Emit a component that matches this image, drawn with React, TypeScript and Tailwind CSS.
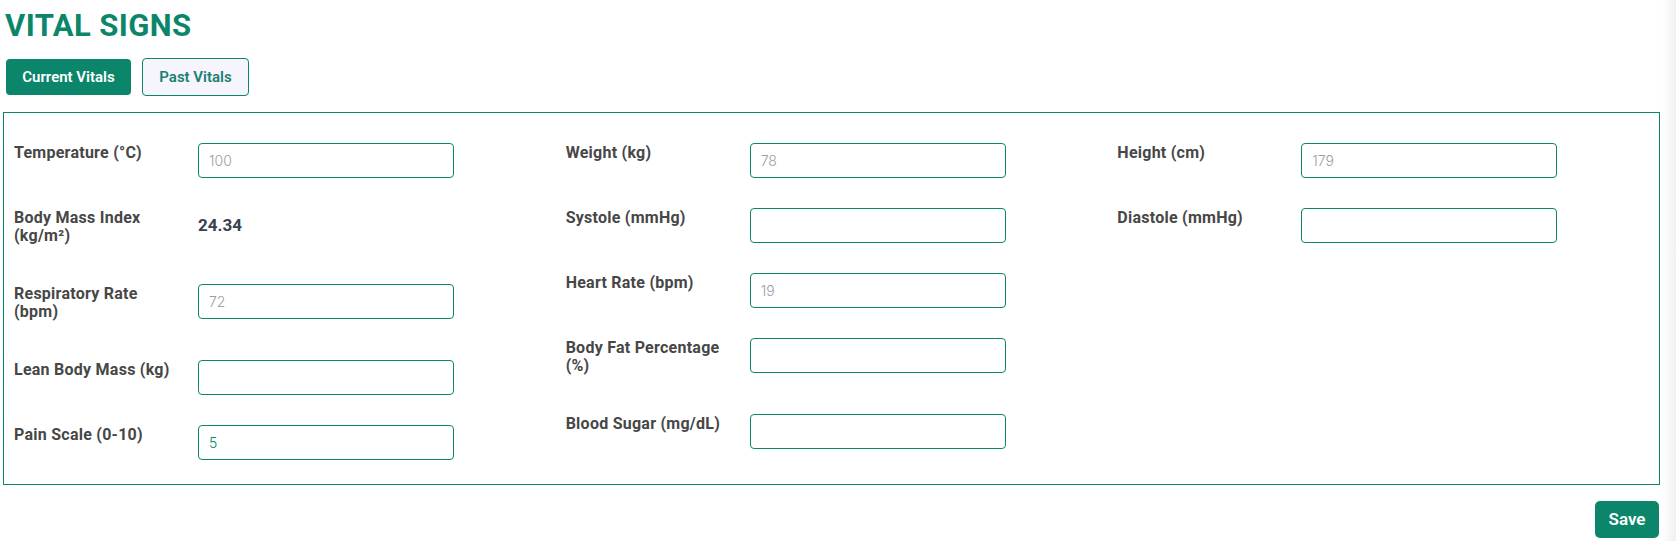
import React from "react";

type Field = {
  label: string;
  value?: string;
  muted?: boolean;
  display?: boolean;
};

const columns: Field[][] = [
  [
    { label: "Temperature (°C)", value: "100", muted: true },
    { label: "Body Mass Index (kg/m²)", value: "24.34", display: true },
    { label: "Respiratory Rate (bpm)", value: "72", muted: true },
    { label: "Lean Body Mass (kg)" },
    { label: "Pain Scale (0-10)", value: "5" },
  ],
  [
    { label: "Weight (kg)", value: "78", muted: true },
    { label: "Systole (mmHg)" },
    { label: "Heart Rate (bpm)", value: "19", muted: true },
    { label: "Body Fat Percentage (%)" },
    { label: "Blood Sugar (mg/dL)" },
  ],
  [
    { label: "Height (cm)", value: "179", muted: true },
    { label: "Diastole (mmHg)" },
  ],
];

const VitalRow = ({ field }: { field: Field }) => (
  <div className="flex items-start">
    <div className="w-[184px] shrink-0 pr-[18px]">
      <label className="block pt-px pb-[9px] text-[16px] leading-[18px] font-bold tracking-[0.25px] text-[#474747]">
        {field.label}
      </label>
    </div>
    {field.display ? (
      <div className="flex h-[35px] items-center text-[17px] font-bold text-[#374151]">
        {field.value}
      </div>
    ) : (
      <input
        type="text"
        defaultValue={field.value ?? ""}
        className={`h-[35px] w-[256px] rounded-[4px] border border-[#0c866a] bg-white px-[10px] font-['Inter',sans-serif] text-[14px] font-light outline-none ${
          field.muted ? "text-[#9a9ca6]" : "text-[#0c866a]"
        }`}
      />
    )}
  </div>
);

export default function App() {
  return (
    <div className="flex min-h-[541px] bg-white font-['Roboto',sans-serif]">
      <div className="flex-1 pl-[3px] pr-[2px]">
        <h1 className="mt-2 pl-[2px] text-[31px] leading-9 font-bold tracking-[0.4px] text-[#0c866a]">
          VITAL SIGNS
        </h1>

        {/* Tabs */}
        <div className="mt-[14px] flex items-center gap-[11px] pl-[3px]">
          <button className="h-[36px] w-[125px] rounded-[4px] bg-[#0c866a] text-[15px] font-semibold text-white">
            Current Vitals
          </button>
          <button className="h-[38px] w-[107px] rounded-[4px] border border-[#0c866a] bg-[#f6f4fd] text-[15px] font-semibold text-[#1a7f73]">
            Past Vitals
          </button>
        </div>

        {/* Vitals form */}
        <div className="mt-4 grid grid-cols-3 gap-5 border border-[#0c866a] px-[10px] pt-[30px] pb-[24px]">
          {columns.map((col, i) => (
            <div key={i} className="flex flex-col gap-[30px]">
              {col.map((f) => (
                <VitalRow key={f.label} field={f} />
              ))}
            </div>
          ))}
        </div>

        <div className="mt-4 flex justify-end pr-px">
          <button className="h-[37px] w-[64px] rounded-[5px] bg-[#0c866a] text-[17px] font-semibold text-white">
            Save
          </button>
        </div>
      </div>
      <div className="w-[14px] bg-linear-to-r from-white to-[#f0f0f0]" />
    </div>
  );
}
